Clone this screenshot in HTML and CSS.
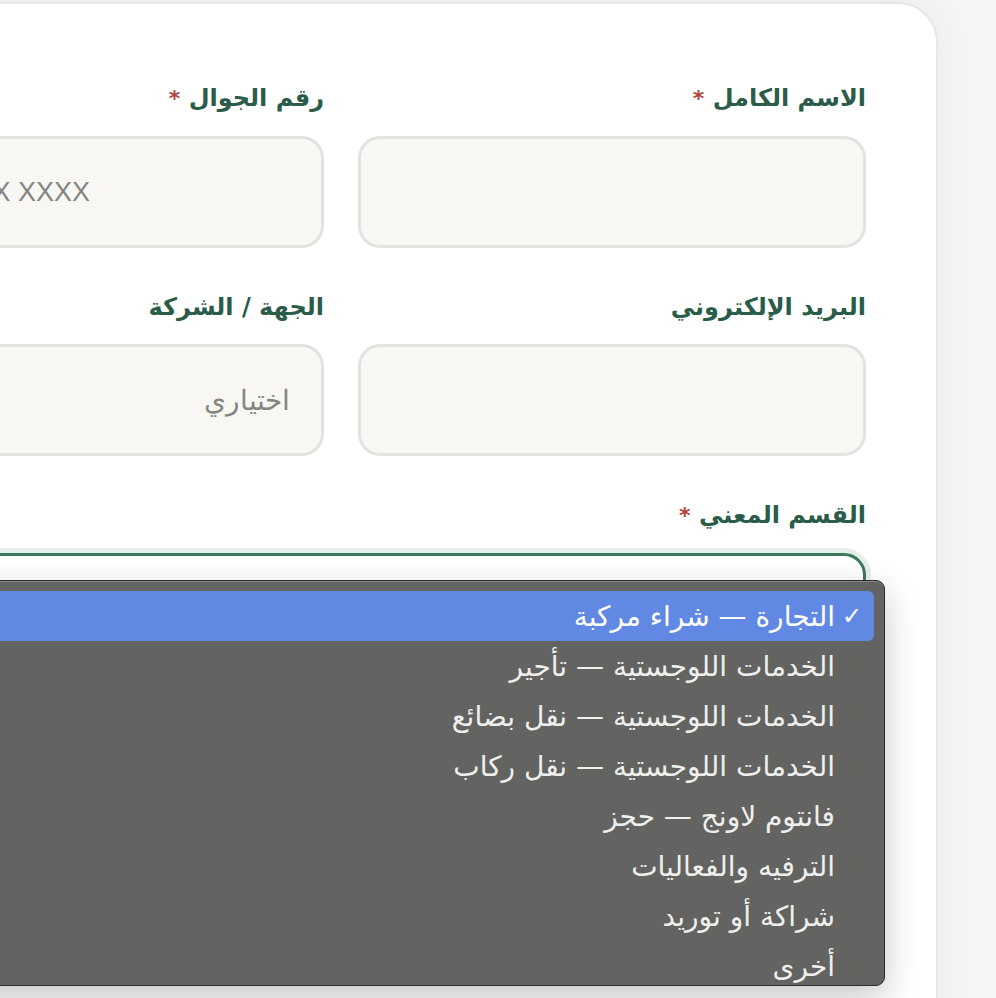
FILE: index.html
```html
<!DOCTYPE html>
<html lang="ar" dir="rtl">
<head>
<meta charset="utf-8">
<title>نموذج التواصل</title>
<link rel="stylesheet" href="styles.css">
</head>
<body>
<div class="page">
  <div class="card">
    <form class="grid">
      <div class="field">
        <label class="label">الاسم الكامل <span class="req">*</span></label>
        <input class="input" type="text">
      </div>
      <div class="field">
        <label class="label">رقم الجوال <span class="req">*</span></label>
        <input class="input phone" type="tel" dir="ltr" placeholder="05XX XXX XXXX">
      </div>
      <div class="field">
        <label class="label">البريد الإلكتروني</label>
        <input class="input" type="email">
      </div>
      <div class="field">
        <label class="label">الجهة / الشركة</label>
        <input class="input" type="text" placeholder="اختياري">
      </div>
      <div class="field full">
        <label class="label">القسم المعني <span class="req">*</span></label>
        <div class="select">
          <div class="menu">
            <div class="item selected"><span class="check">✓</span><span>التجارة — شراء مركبة</span></div>
            <div class="item"><span class="check"></span><span>الخدمات اللوجستية — تأجير</span></div>
            <div class="item"><span class="check"></span><span>الخدمات اللوجستية — نقل بضائع</span></div>
            <div class="item"><span class="check"></span><span>الخدمات اللوجستية — نقل ركاب</span></div>
            <div class="item"><span class="check"></span><span>فانتوم لاونج — حجز</span></div>
            <div class="item"><span class="check"></span><span>الترفيه والفعاليات</span></div>
            <div class="item"><span class="check"></span><span>شراكة أو توريد</span></div>
            <div class="item"><span class="check"></span><span>أخرى</span></div>
          </div>
        </div>
      </div>
    </form>
  </div>
</div>
</body>
</html>
```
FILE: styles.css
```css
html, body {
  margin: 0;
  height: 100%;
}
body {
  background: #f4f5f5;
  overflow: hidden;
  direction: rtl;
  font-family: "DejaVu Sans", "Noto Sans", sans-serif;
}
.page {
  padding: 2px 58px 0 0;
}
.card {
  box-sizing: border-box;
  width: 1200px;
  min-height: 1100px;
  background: #ffffff;
  border: 2px solid #e4e8e6;
  border-radius: 40px;
  padding: 79px 70px 0 0;
  box-shadow: 0 0 40px rgba(30, 50, 40, 0.05);
}
.grid {
  display: grid;
  grid-template-columns: 508px 508px;
  column-gap: 34px;
  row-gap: 44px;
  margin: 0;
}
.field.full {
  grid-column: 1 / -1;
}
.label {
  display: block;
  font-size: 24px;
  font-weight: bold;
  line-height: 30px;
  margin-bottom: 22px;
  color: #2a5c49;
}
.req {
  color: #b3443a;
  font-size: 22px;
}
.input {
  display: block;
  box-sizing: border-box;
  width: 100%;
  height: 112px;
  border: 3px solid #e1e4de;
  border-radius: 22px;
  background: #f8f7f4;
  padding: 0 31px;
  font-size: 28px;
  font-family: "DejaVu Sans", sans-serif;
  color: #333;
  outline: none;
}
.input::placeholder {
  color: #858583;
  font-weight: 300;
}
.input.phone {
  font-family: "Liberation Sans", sans-serif;
  font-size: 27px;
  padding-left: 64px;
}
.select {
  position: relative;
  box-sizing: border-box;
  height: 112px;
  border: 3px solid #3b7a5f;
  border-radius: 22px;
  background: #ffffff;
  box-shadow: 0 0 0 5px #e7efeb;
}
.menu {
  position: absolute;
  top: 24px;
  right: -22px;
  box-sizing: border-box;
  width: 1000px;
  height: 406px;
  padding: 10px 10px 0;
  background: #636361;
  border: 1px solid #2b2b2a;
  border-radius: 9px;
  overflow: hidden;
  box-shadow: inset 0 1px 0 rgba(255, 255, 255, 0.22), 0 12px 34px rgba(0, 0, 0, 0.22);
}
.item {
  display: flex;
  align-items: center;
  height: 50px;
  padding-right: 12px;
  border-radius: 6px;
  color: #efefed;
  font-size: 28px;
  white-space: nowrap;
}
.item.selected {
  background: #6189e3;
  color: #ffffff;
}
.check {
  display: inline-block;
  width: 27px;
  flex: none;
  text-align: right;
  font-size: 24px;
  font-weight: bold;
}
```
